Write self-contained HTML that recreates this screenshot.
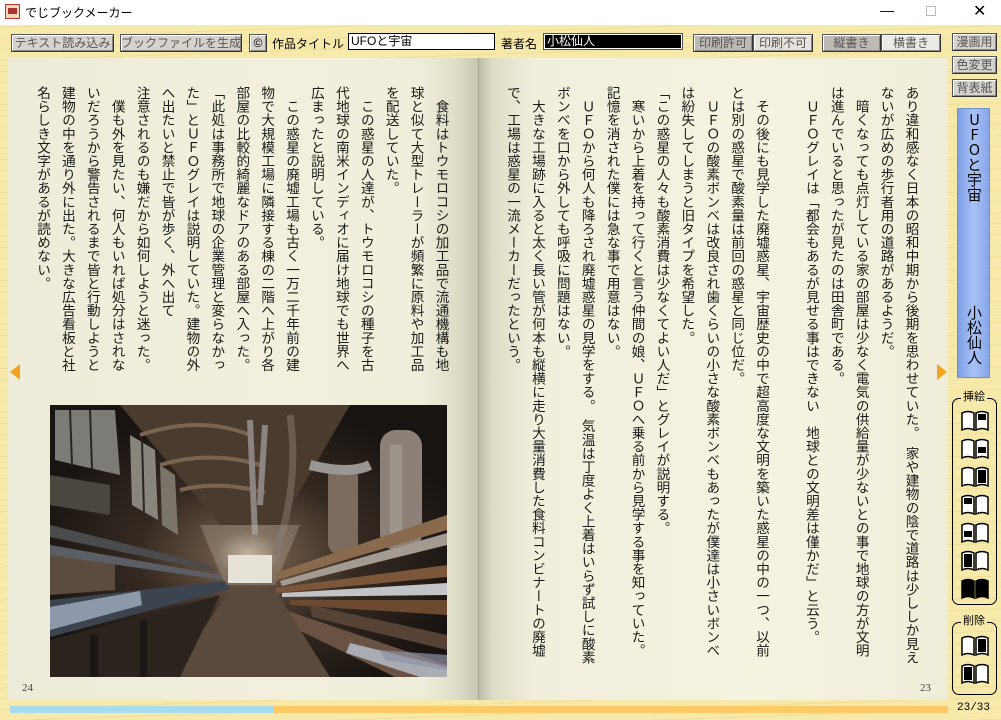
<!DOCTYPE html>
<html><head><meta charset="utf-8">
<style>
*{margin:0;padding:0;box-sizing:border-box}
body{width:1001px;height:720px;overflow:hidden;position:relative;font-family:"Liberation Sans","Noto Sans CJK JP",sans-serif;background:#f7e9aa;
background-image:repeating-linear-gradient(178deg,rgba(255,255,255,0) 0 5px,rgba(220,190,110,.25) 5px 6px,rgba(255,255,255,0) 6px 11px);}
.tb{position:absolute;left:0;top:0;width:1001px;height:25px;background:#fff;font-size:12px;}
.a{position:absolute}
.btn{position:absolute;height:18px;background:#d6d3cc;border:1px solid #555;border-right-color:#333;border-bottom-color:#333;box-shadow:inset 1px 1px 0 #fff,inset -1px -1px 0 #888;font-size:12px;color:#555;text-align:center;line-height:16px;font-family:"Liberation Sans","Noto Sans CJK JP",sans-serif}
.lbl{position:absolute;font-size:12px;color:#000;top:35px}
.page{position:absolute;top:58px;height:642px}
.col{position:absolute;top:86px;writing-mode:vertical-rl;font-family:"Noto Sans CJK JP",sans-serif;font-size:13.6px;line-height:24.9px;white-space:pre;color:#1a1a1a;letter-spacing:0}
.pn{position:absolute;top:682px;font-family:"Liberation Serif",serif;font-size:11px;color:#444}
.panel{position:absolute;left:952px;width:45px;border:1.5px solid #000;border-radius:7px}
.panel .t{position:absolute;top:-9px;left:8px;font-size:11px;background:#f7e9aa;padding:0 2px;line-height:14px}
.ic{position:absolute;left:7px;width:30px;height:22px}
</style></head><body>
<div class="tb">
 <div class="a" style="left:5px;top:4px;width:15px;height:15px;border:1px solid #b33;background:#f4d9b8"><div style="margin:3px 2px;height:6px;background:#a33"></div></div>
 <div class="a" style="left:25px;top:4px">でじブックメーカー</div>
 <div class="a" style="left:880px;top:2px;font-size:14px">—</div>
 <div class="a" style="left:926px;top:6px;width:10px;height:10px;border:1px solid #bbb"></div>
 <div class="a" style="left:973px;top:1px;font-size:16px">✕</div>
</div>

<div class="btn" style="left:11px;top:34px;width:103px">テキスト読み込み</div>
<div class="btn" style="left:120px;top:34px;width:122px">ブックファイルを生成</div>
<div class="btn" style="left:249px;top:34px;width:18px;color:#000">©</div>
<div class="lbl" style="left:272px">作品タイトル</div>
<div class="a" style="left:348px;top:33px;width:147px;height:17px;background:#fff;border:1px solid #000;font-size:12px;line-height:15px;padding-left:2px">UFOと宇宙</div>
<div class="lbl" style="left:501px">著者名</div>
<div class="a" style="left:543px;top:33px;width:140px;height:17px;background:#000;border:1px solid #555;outline:1px solid #fff;outline-offset:-2px;font-size:12px;line-height:15px;padding-left:3px;color:#fff">小松仙人</div>
<div class="btn" style="left:693px;top:34px;width:60px;background:#bdbab4">印刷許可</div>
<div class="btn" style="left:753px;top:34px;width:60px;background:#e6e3dd">印刷不可</div>
<div class="btn" style="left:822px;top:34px;width:59px;background:#bdbab4">縦書き</div>
<div class="btn" style="left:881px;top:34px;width:60px;background:#eceae4">横書き</div>
<div class="btn" style="left:952px;top:33px;width:45px;height:18px">漫画用</div>
<div class="btn" style="left:952px;top:56px;width:45px;height:18px">色変更</div>
<div class="btn" style="left:952px;top:79px;width:45px;height:18px">背表紙</div>

<div class="page" style="left:8px;width:470px;background:linear-gradient(to right,#eeecd8 0%,#f2f0dd 60%,#f0eeda 88%,#dddbc5 96%,#c8c6b0 100%)"></div>
<div class="page" style="left:478px;width:470px;background:linear-gradient(to right,#bdbba4 0%,#dedcc6 3%,#f1efdc 12%,#f5f3e0 60%,#f0eed9 100%)"></div>
<div class="a" style="left:478px;top:58px;width:1px;height:642px;background:#a9a792"></div>

<div class="col" style="right:546.5px">　食料はトウモロコシの加工品で流通機構も地
球と似て大型トレーラーが頻繁に原料や加工品
を配送していた。
　この惑星の人達が、トウモロコシの種子を古
代地球の南米インディオに届け地球でも世界へ
広まったと説明している。
　この惑星の廃墟工場も古く一万二千年前の建
物で大規模工場に隣接する棟の二階へ上がり各
部屋の比較的綺麗なドアのある部屋へ入った。
「此処は事務所で地球の企業管理と変らなかっ
た」とＵＦＯグレイは説明していた。建物の外
へ出たいと禁止で皆が歩く、外へ出て
注意されるのも嫌だから如何しようと迷った。
　僕も外を見たい、何人もいれば処分はされな
いだろうから警告されるまで皆と行動しようと
建物の中を通り外に出た。大きな広告看板と社
名らしき文字があるが読めない。</div>

<div class="col" style="right:76.5px">あり違和感なく日本の昭和中期から後期を思わせていた。　家や建物の陰で道路は少ししか見え
ないが広めの歩行者用の道路があるようだ。
　暗くなっても点灯している家の部屋は少なく電気の供給量が少ないとの事で地球の方が文明
は進んでいると思ったが見たのは田舎町である。
　ＵＦＯグレイは「都会もあるが見せる事はできない　地球との文明差は僅かだ」と云う。

　その後にも見学した廃墟惑星、宇宙歴史の中で超高度な文明を築いた惑星の中の一つ、以前
とは別の惑星で酸素量は前回の惑星と同じ位だ。
　ＵＦＯの酸素ボンベは改良され歯くらいの小さな酸素ボンベもあったが僕達は小さいボンベ
は紛失してしまうと旧タイプを希望した。
「この惑星の人々も酸素消費は少なくてよい人だ」とグレイが説明する。
　寒いから上着を持って行くと言う仲間の娘、ＵＦＯへ乗る前から見学する事を知っていた。
記憶を消された僕には急な事で用意はない。
　ＵＦＯから何人も降ろされ廃墟惑星の見学をする。　気温は丁度よく上着はいらず試しに酸素
ボンベを口から外しても呼吸に問題はない。
　大きな工場跡に入ると太く長い管が何本も縦横に走り大量消費した食料コンビナートの廃墟
で、工場は惑星の一流メーカーだったという。</div>

<svg class="a" style="left:50px;top:405px" width="397" height="272" viewBox="0 0 397 272">
<defs>
<radialGradient id="g1" cx="0.5" cy="0.55" r="0.55"><stop offset="0" stop-color="#b9ab96"/><stop offset="0.15" stop-color="#6a5544"/><stop offset="0.5" stop-color="#352a22"/><stop offset="1" stop-color="#191411"/></radialGradient>
</defs>
<rect width="397" height="272" fill="url(#g1)"/>
<!-- left windows -->
<polygon points="5,5 65,5 70,70 5,55" fill="#7c7b76"/>
<polygon points="80,30 105,45 108,115 82,100" fill="#8a857c"/>
<polygon points="110,60 125,70 128,130 112,120" fill="#7a746a"/>
<g stroke="#2a2520" stroke-width="2"><line x1="20" y1="5" x2="22" y2="60"/><line x1="40" y1="5" x2="42" y2="64"/><line x1="92" y1="35" x2="94" y2="108"/></g>
<polygon points="0,70 60,80 60,110 0,100" fill="#4b4640"/>
<polygon points="0,150 65,152 65,185 0,190" fill="#5a4c3e"/>
<!-- ceiling -->
<polygon points="70,0 300,0 230,120 170,120" fill="#4a3b2f"/>
<path d="M90 30 Q150 10 200 30 M110 60 Q160 45 210 60 M130 85 Q170 75 215 88" stroke="#7a6550" stroke-width="4" fill="none"/>
<!-- pipes ceiling -->
<path d="M200 15 L205 130 M215 20 L210 100" stroke="#8c8480" stroke-width="6" fill="none"/>
<path d="M240 10 Q250 80 225 150" stroke="#6a5a50" stroke-width="7" fill="none"/>
<!-- light window -->
<rect x="178" y="150" width="44" height="28" fill="#ece8df"/>
<polygon points="150,120 250,120 225,180 175,180" fill="#d9d0c0" opacity=".25"/>
<!-- right side big pipes -->
<rect x="330" y="25" width="42" height="120" rx="16" fill="#8b8178"/>
<rect x="340" y="40" width="12" height="90" fill="#a59c94" opacity=".7"/>
<rect x="278" y="60" width="30" height="90" rx="12" fill="#7c6b5e"/>
<path d="M260 60 Q300 70 320 60" stroke="#9a9694" stroke-width="10" fill="none"/>
<polygon points="397,110 225,168 227,175 397,125" fill="#8a6a4c"/>
<polygon points="397,128 230,176 232,181 397,140" fill="#a39a92"/>
<polygon points="397,160 225,183 226,188 397,172" fill="#7b5638"/>
<polygon points="397,178 232,188 232,192 397,190" fill="#c2c4c8"/>
<polygon points="397,195 240,195 240,200 397,210" fill="#6c4a32"/>
<!-- left long pipe -->
<polygon points="0,195 175,176 180,184 0,232" fill="#3c4450"/>
<polygon points="0,202 90,186 92,200 0,225" fill="#8d98aa"/>
<polygon points="0,140 170,170 172,175 0,150" fill="#5c5e66"/>
<polygon points="0,120 160,160 165,166 0,132" fill="#4b4a4c"/>
<!-- lower right pipes -->
<polygon points="235,205 397,260 397,272 345,272 228,215" fill="#6a5242"/>
<polygon points="300,238 397,262 397,272 370,272 296,248" fill="#a9acb2"/>
<polygon points="260,200 397,230 397,245 262,212" fill="#574236"/>
<polygon points="330,245 397,250 397,265 335,255" fill="#8e92a2" opacity=".7"/>
<!-- floor -->
<polygon points="180,185 225,185 280,272 120,272" fill="#5a4a3c"/>
<polygon points="0,235 170,190 130,272 0,272" fill="#2b231d"/>
<rect x="40" y="230" width="8" height="42" fill="#1c1714"/>
<rect x="90" y="215" width="7" height="57" fill="#1c1714"/>
</svg>

<div class="pn" style="left:22px">24</div>
<div class="pn" style="left:920px">23</div>
<div class="a" style="left:10px;top:364px;width:0;height:0;border-top:8px solid transparent;border-bottom:8px solid transparent;border-right:10px solid #f2a41e"></div>
<div class="a" style="left:937px;top:364px;width:0;height:0;border-top:8px solid transparent;border-bottom:8px solid transparent;border-left:10px solid #f2a41e"></div>

<div class="a" style="left:10px;top:706px;width:264px;height:7px;background:#a9dbef"></div>
<div class="a" style="left:274px;top:706px;width:674px;height:7px;background:#fdca66"></div>

<div class="a" style="left:957px;top:108px;width:33px;height:270px;background:linear-gradient(to right,#7e9fe6,#a8c2f6 50%,#86a6ea);border:1px solid #7090d0"></div>
<div class="a" style="left:965px;top:112px;writing-mode:vertical-rl;font-size:15px;line-height:18px;font-family:'Noto Sans CJK JP',sans-serif;text-orientation:upright">UFOと宇宙</div>
<div class="a" style="left:965px;top:305px;writing-mode:vertical-rl;font-size:15px;line-height:18px;font-family:'Noto Sans CJK JP',sans-serif">小松仙人</div>

<div class="panel" style="top:398px;height:207px"><div class="t">挿絵</div>
<svg class="ic" style="top:10px" viewBox="0 0 30 22"><path d="M2 4Q8 1 14 4V21Q8 18 2 21Z M16 4Q22 1 28 4V21Q22 18 16 21Z" fill="#fff" stroke="#000" stroke-width="1.5"/><rect x="18" y="5" width="8" height="6" fill="#000"/></svg>
<svg class="ic" style="top:38px" viewBox="0 0 30 22"><path d="M2 4Q8 1 14 4V21Q8 18 2 21Z M16 4Q22 1 28 4V21Q22 18 16 21Z" fill="#fff" stroke="#000" stroke-width="1.5"/><rect x="18" y="10" width="8" height="6" fill="#000"/></svg>
<svg class="ic" style="top:66px" viewBox="0 0 30 22"><path d="M2 4Q8 1 14 4V21Q8 18 2 21Z M16 4Q22 1 28 4V21Q22 18 16 21Z" fill="#fff" stroke="#000" stroke-width="1.5"/><rect x="18" y="5" width="8" height="13" fill="#000"/></svg>
<svg class="ic" style="top:94px" viewBox="0 0 30 22"><path d="M2 4Q8 1 14 4V21Q8 18 2 21Z M16 4Q22 1 28 4V21Q22 18 16 21Z" fill="#fff" stroke="#000" stroke-width="1.5"/><rect x="4" y="5" width="8" height="6" fill="#000"/></svg>
<svg class="ic" style="top:122px" viewBox="0 0 30 22"><path d="M2 4Q8 1 14 4V21Q8 18 2 21Z M16 4Q22 1 28 4V21Q22 18 16 21Z" fill="#fff" stroke="#000" stroke-width="1.5"/><rect x="4" y="10" width="8" height="6" fill="#000"/></svg>
<svg class="ic" style="top:150px" viewBox="0 0 30 22"><path d="M2 4Q8 1 14 4V21Q8 18 2 21Z M16 4Q22 1 28 4V21Q22 18 16 21Z" fill="#fff" stroke="#000" stroke-width="1.5"/><rect x="4" y="5" width="8" height="13" fill="#000"/></svg>
<svg class="ic" style="top:178px" viewBox="0 0 30 22"><path d="M2 4Q8 1 14 4V21Q8 18 2 21Z M16 4Q22 1 28 4V21Q22 18 16 21Z" fill="#000" stroke="#000" stroke-width="1.5"/></svg>
</div>
<div class="panel" style="top:622px;height:73px"><div class="t">削除</div>
<svg class="ic" style="top:11px" viewBox="0 0 30 22"><path d="M2 4Q8 1 14 4V21Q8 18 2 21Z M16 4Q22 1 28 4V21Q22 18 16 21Z" fill="#fff" stroke="#000" stroke-width="1.5"/><rect x="18" y="5" width="8" height="13" fill="#000"/></svg>
<svg class="ic" style="top:39px" viewBox="0 0 30 22"><path d="M2 4Q8 1 14 4V21Q8 18 2 21Z M16 4Q22 1 28 4V21Q22 18 16 21Z" fill="#fff" stroke="#000" stroke-width="1.5"/><rect x="4" y="5" width="8" height="13" fill="#000"/></svg>
</div>
<div class="a" style="left:957px;top:702px;font-family:'Liberation Mono',monospace;font-size:11px">23/33</div>
</body></html>
